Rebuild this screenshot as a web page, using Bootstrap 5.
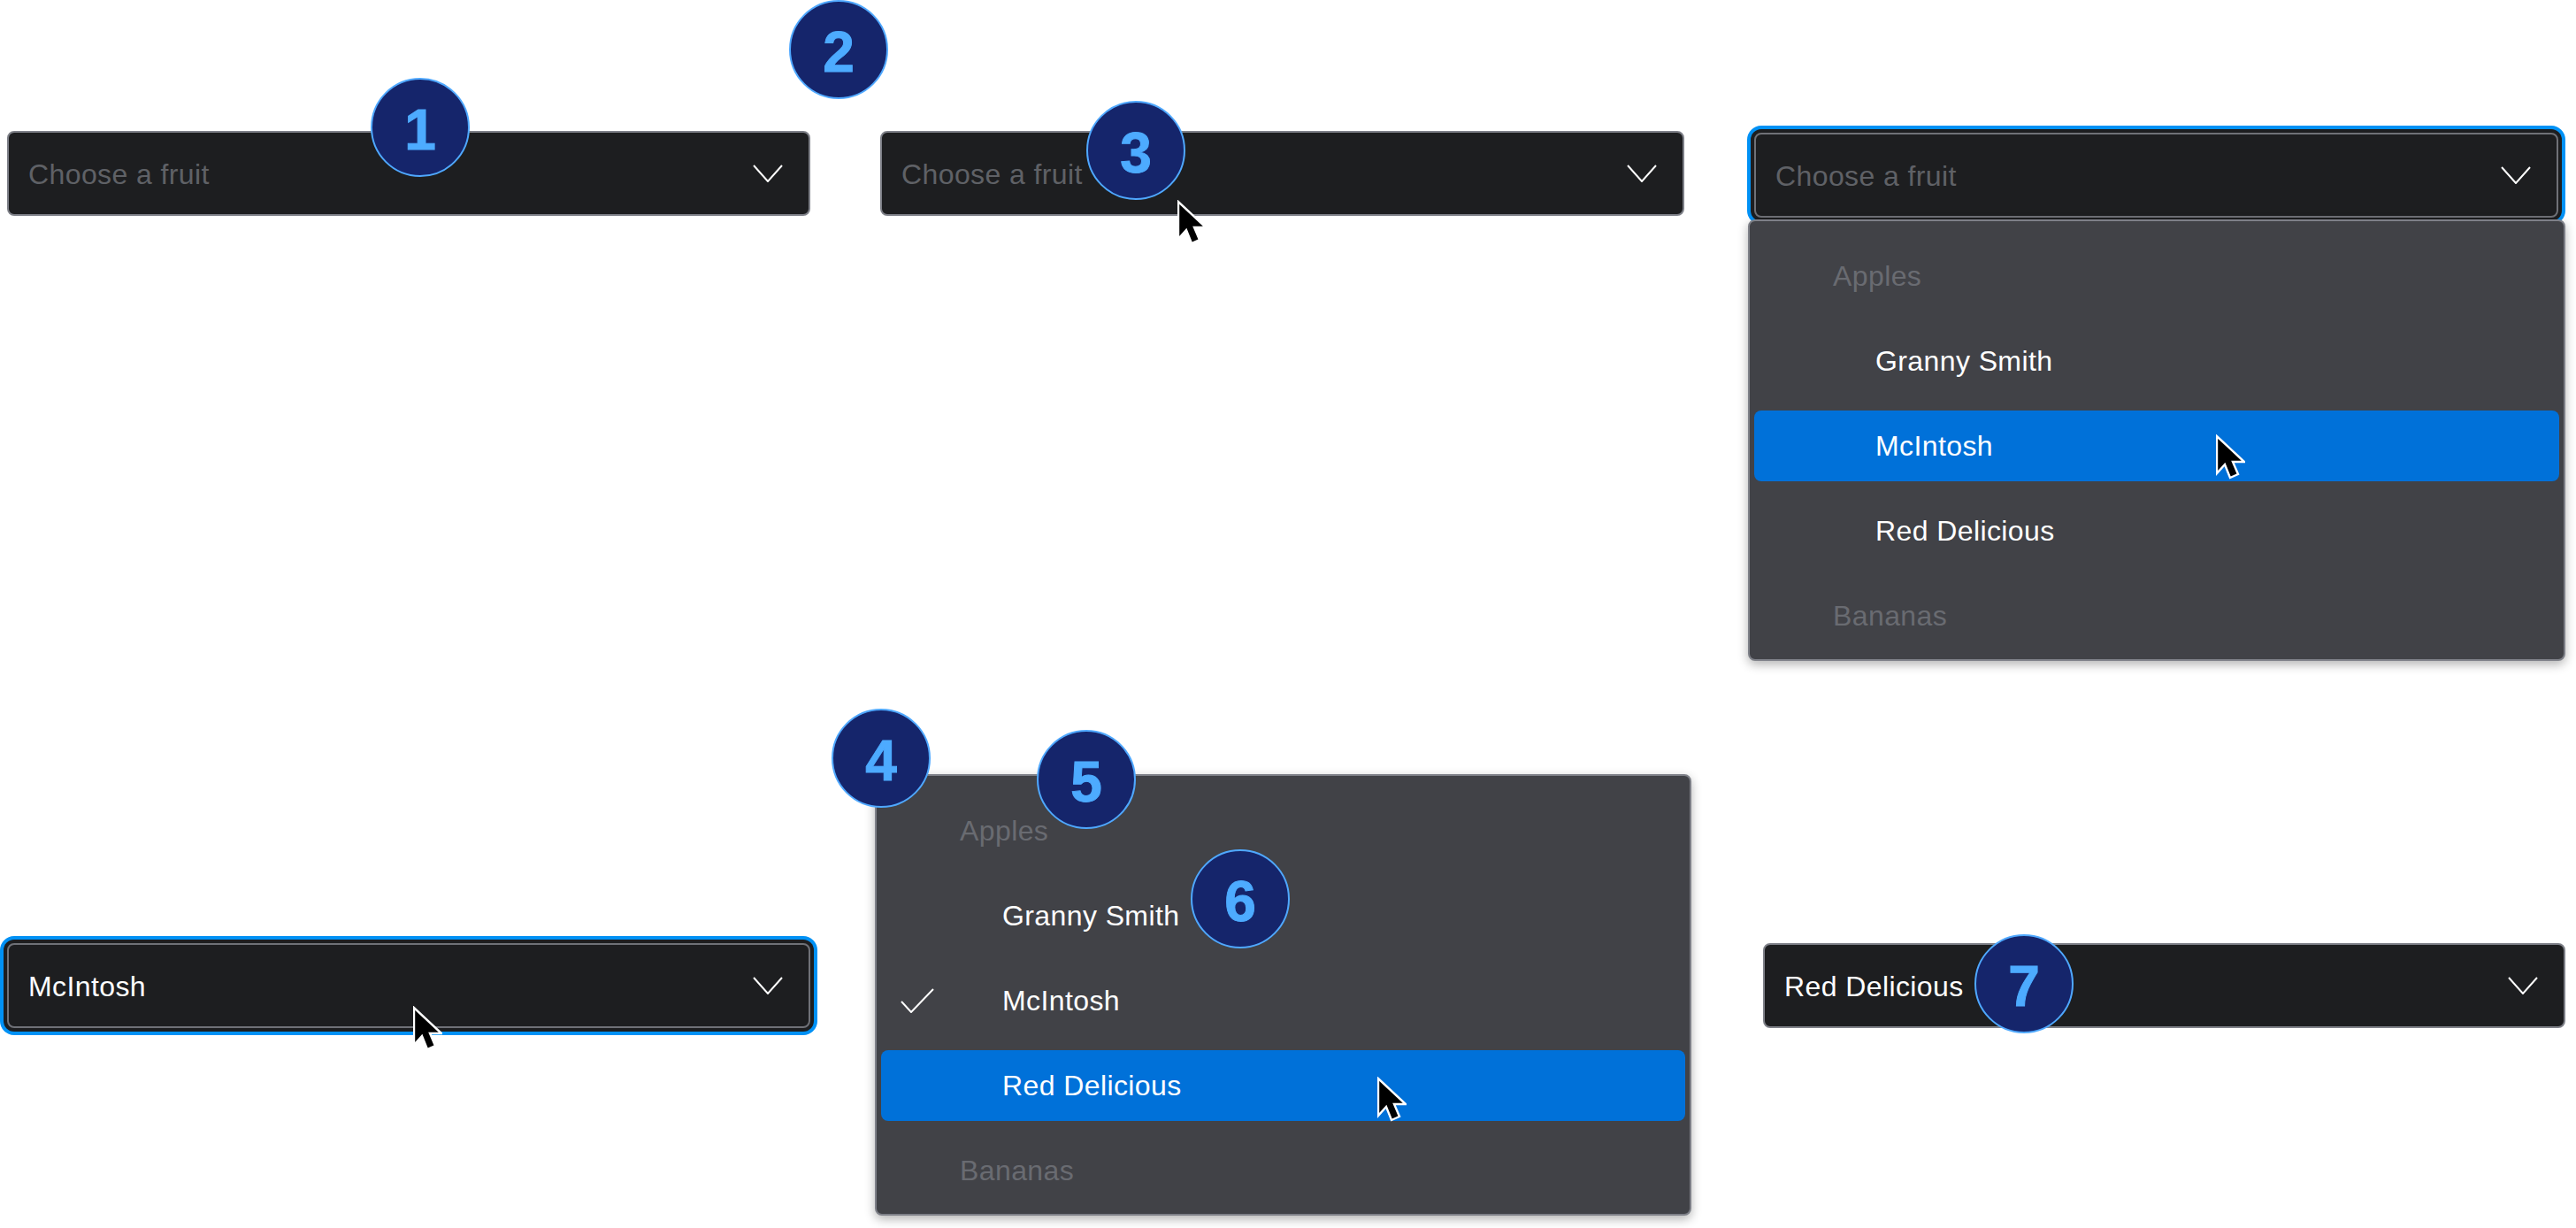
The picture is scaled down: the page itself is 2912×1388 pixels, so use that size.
<!DOCTYPE html>
<html lang="en">
<head>
  <meta charset="UTF-8">
  <title>Select states</title>
  <link href="https://cdn.jsdelivr.net/npm/bootstrap@5.3.0/dist/css/bootstrap.min.css" rel="stylesheet">
  <style>
    body {
      background: #fff;
      font-family: "Liberation Sans", Arial, sans-serif;
      width: 2912px;
      height: 1388px;
      overflow: hidden;
      position: relative;
    }
    .states-top {
      padding: 148px 20px 0 8px;
      gap: 79px;
      height: 876px;
    }
    .states-bottom {
      padding-left: 8px;
    }
    .state-col {
      width: 908px;
      flex: none;
    }
    .state-top-mid {
      width: 909px;
    }
    .state-top-right {
      width: 909px;
      padding-top: 2px;
    }
    .fruit-select {
      position: relative;
      width: 100%;
      height: 96px;
      padding: 1px 22px 0;
      background: #1d1e20;
      border: 2px solid #7e8088;
      border-radius: 8px;
      color: #fff;
      font-size: 32px;
      letter-spacing: .4px;
      text-align: left;
    }
    .fruit-select:hover, .fruit-select:active {
      background: #1d1e20;
      border-color: #7e8088;
      color: #fff;
    }
    .fruit-select.is-focus {
      box-shadow: 0 0 0 4px #1d1e20, 0 0 0 8px #0091f5;
      border-color: #6f7177;
    }
    .fruit-select .hint {
      color: #5f6166;
    }
    .fruit-select svg {
      width: 34px;
      height: 20px;
      margin-right: 7px;
      margin-top: -1px;
      flex: none;
    }
    .fruit-menu {
      width: 924px;
      min-width: 0;
      padding: 22px 0 9px;
      margin: 0;
      background: #414247;
      border: 2px solid #7e8088;
      border-radius: 8px;
      box-shadow: 0 4px 12px rgba(0, 0, 0, .3);
      font-size: 32px;
      letter-spacing: .4px;
    }
    .fruit-menu.show {
      display: flex;
      flex-direction: column;
      gap: 16px;
    }
    .menu-right {
      margin: 2px 0 0 -7px;
    }
    .fruit-menu .dropdown-header, .fruit-menu .dropdown-item {
      height: 80px;
      margin: 0 5px;
      width: auto;
      padding: 0 0 0 137px;
      display: flex;
      align-items: center;
      border-radius: 8px;
      font-size: 32px;
      color: #fff;
      position: relative;
    }
    .fruit-menu .dropdown-header {
      padding-left: 89px;
      color: #696b71;
    }
    .fruit-menu .dropdown-item.active {
      background: #0071d9;
      color: #fff;
    }
    .tick {
      position: absolute;
      left: 22px;
      top: 26px;
      width: 38px;
      height: 28px;
    }
    .state-bottom-mid {
      margin-left: 73px;
      width: 923px;
    }
    .state-bottom-mid .fruit-menu {
      width: 923px;
      margin-top: -1px;
    }
    .state-bottom-right {
      margin: 190px 0 0 81px;
      width: 907px;
    }
    .state-bottom-left {
      margin-top: 190px;
    }
    .step {
      position: absolute;
      width: 112px;
      height: 112px;
      border-radius: 50%;
      background: #15256b;
      border: 2px solid #4fa8ff;
      color: #4dabff;
      font-family: "Liberation Sans", Arial, sans-serif;
      font-weight: 700;
      font-size: 64px;
      line-height: 114px;
      text-align: center;
      -webkit-text-stroke: 1px #4dabff;
      z-index: 1100;
    }
    .arrow {
      position: absolute;
      width: 33px;
      height: 51px;
      z-index: 1100;
    }
  </style>
</head>
<body>
  <div class="states-top d-flex align-items-start">
    <div class="state-col">
      <button class="btn fruit-select d-flex justify-content-between align-items-center" type="button">
        <span class="hint">Choose a fruit</span>
        <svg viewBox="0 0 34 20"><path d="M1 1 L17 19 L33 1" fill="none" stroke="#fff" stroke-width="2"/></svg>
      </button>
    </div>
    <div class="state-col state-top-mid">
      <button class="btn fruit-select d-flex justify-content-between align-items-center" type="button">
        <span class="hint">Choose a fruit</span>
        <svg viewBox="0 0 34 20"><path d="M1 1 L17 19 L33 1" fill="none" stroke="#fff" stroke-width="2"/></svg>
      </button>
    </div>
    <div class="state-col state-top-right">
      <button class="btn fruit-select is-focus d-flex justify-content-between align-items-center" type="button">
        <span class="hint">Choose a fruit</span>
        <svg viewBox="0 0 34 20"><path d="M1 1 L17 19 L33 1" fill="none" stroke="#fff" stroke-width="2"/></svg>
      </button>
      <div class="dropdown-menu show position-relative fruit-menu menu-right">
        <div class="dropdown-header">Apples</div>
        <a class="dropdown-item" href="#">Granny Smith</a>
        <a class="dropdown-item active" href="#">McIntosh</a>
        <a class="dropdown-item" href="#">Red Delicious</a>
        <div class="dropdown-header">Bananas</div>
      </div>
    </div>
  </div>
  <div class="states-bottom d-flex align-items-start">
    <div class="state-col state-bottom-left">
      <button class="btn fruit-select is-focus d-flex justify-content-between align-items-center" type="button">
        <span>McIntosh</span>
        <svg viewBox="0 0 34 20"><path d="M1 1 L17 19 L33 1" fill="none" stroke="#fff" stroke-width="2"/></svg>
      </button>
    </div>
    <div class="state-col state-bottom-mid">
      <div class="dropdown-menu show position-relative fruit-menu">
        <div class="dropdown-header">Apples</div>
        <a class="dropdown-item" href="#">Granny Smith</a>
        <a class="dropdown-item" href="#">
          <svg class="tick" viewBox="0 0 38 28"><path d="M1 15 L12 27 L37 1" fill="none" stroke="#fff" stroke-width="2"/></svg>
          McIntosh
        </a>
        <a class="dropdown-item active" href="#">Red Delicious</a>
        <div class="dropdown-header">Bananas</div>
      </div>
    </div>
    <div class="state-col state-bottom-right">
      <button class="btn fruit-select d-flex justify-content-between align-items-center" type="button">
        <span>Red Delicious</span>
        <svg viewBox="0 0 34 20"><path d="M1 1 L17 19 L33 1" fill="none" stroke="#fff" stroke-width="2"/></svg>
      </button>
    </div>
  </div>

  <div class="step" style="left:419px;top:88px">1</div>
  <div class="step" style="left:892px;top:0">2</div>
  <div class="step" style="left:1228px;top:114px">3</div>
  <div class="step" style="left:940px;top:801px">4</div>
  <div class="step" style="left:1172px;top:825px">5</div>
  <div class="step" style="left:1346px;top:960px">6</div>
  <div class="step" style="left:2232px;top:1056px">7</div>

  <svg class="arrow" style="left:1331px;top:226px" viewBox="0 0 33 51"><path d="M1 2 V44 L10 34 L16 49 L25 45 L19 31 L32 31 Z" fill="#000" stroke="#fff" stroke-width="2.4"/></svg>
  <svg class="arrow" style="left:2505px;top:491px" viewBox="0 0 33 51"><path d="M1 2 V44 L10 34 L16 49 L25 45 L19 31 L32 31 Z" fill="#000" stroke="#fff" stroke-width="2.4"/></svg>
  <svg class="arrow" style="left:467px;top:1137px" viewBox="0 0 33 51"><path d="M1 2 V44 L10 34 L16 49 L25 45 L19 31 L32 31 Z" fill="#000" stroke="#fff" stroke-width="2.4"/></svg>
  <svg class="arrow" style="left:1557px;top:1217px" viewBox="0 0 33 51"><path d="M1 2 V44 L10 34 L16 49 L25 45 L19 31 L32 31 Z" fill="#000" stroke="#fff" stroke-width="2.4"/></svg>

  <script src="https://cdn.jsdelivr.net/npm/bootstrap@5.3.0/dist/js/bootstrap.bundle.min.js"></script>
</body>
</html>
